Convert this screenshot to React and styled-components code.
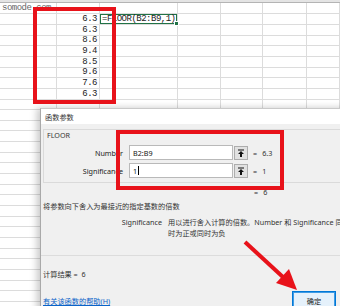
import React from "react";
import styled, { createGlobalStyle } from "styled-components";

const GlobalStyle = createGlobalStyle`
  html, body { margin: 0; padding: 0; background: #fff; }
  body { width: 340px; height: 306px; overflow: hidden; }
`;

const UI_FONT = `"Noto Sans", "Noto Sans CJK SC", sans-serif`;
const SHEET_FONT = `"Liberation Mono", "Noto Sans CJK SC", monospace`;
const RED = "#e8121a";

const COLS = "57px 43px 78px 43px 42px 44px 1fr";
const VALUES = ["6.3", "6.3", "8.6", "9.4", "8.5", "9.6", "7.6", "6.3"];
const ROW_COUNT = 28;

// bottom grid line of row i sits at round(13 + i * 10.67)
const rowHeight = (i) => {
  const prev = i === 0 ? 2 : Math.round(13 + (i - 1) * 10.67);
  return Math.round(13 + i * 10.67) - prev;
};

const Page = styled.div`
  position: relative;
  width: 340px;
  height: 306px;
  overflow: hidden;
  background: #fff;
`;

/* ---------- spreadsheet ---------- */
const Sheet = styled.div`
  display: flex;
  flex-direction: column;
`;

const HeaderStrip = styled.div`
  height: 3px;
  box-sizing: border-box;
  background: #e4e4e4;
  border-bottom: 1px solid #b4b4b4;
`;

const Row = styled.div`
  display: grid;
  grid-template-columns: ${COLS};
  height: ${(p) => p.$h}px;
`;

const Cell = styled.div`
  position: relative;
  box-sizing: border-box;
  border-right: 1px solid #dcdcdc;
  border-bottom: 1px solid #dcdcdc;
  font-family: ${SHEET_FONT};
  font-size: 9px;
  letter-spacing: -0.5px;
  color: ${(p) => (p.$muted ? "#666" : "#222")};
  text-align: ${(p) => p.$align || "left"};
  padding: 0 2px;
  white-space: nowrap;
  display: flex;
  align-items: center;
  justify-content: ${(p) => (p.$align === "right" ? "flex-end" : "flex-start")};
`;

const FormulaCell = styled(Cell)`
  box-shadow: inset 0 0 0 1px #217346;
  overflow: visible;
  z-index: 1;

  &::after {
    content: "";
    position: absolute;
    right: -2px;
    bottom: -2px;
    width: 3px;
    height: 3px;
    background: #217346;
    border: 1px solid #fff;
  }
`;

/* ---------- dialog ---------- */
const Dialog = styled.div`
  position: absolute;
  left: 40px;
  top: 108px;
  width: 312px;
  height: 210px;
  display: flex;
  flex-direction: column;
  border-left: 1px solid #a9a9a9;
  border-top: 1px solid #c9c9c9;
  box-shadow: -3px 0 7px rgba(0, 0, 0, 0.22);
  font-family: ${UI_FONT};
  font-size: 7.2px;
  color: #222;
  z-index: 2;
`;

const TitleBar = styled.div`
  height: 15px;
  background: #fff;
  display: flex;
  align-items: center;
  padding-left: 4px;
  font-size: 7.2px;
  color: #333;
`;

const Body = styled.div`
  flex: 1;
  background: #f0f0f0;
  padding: 5px 0 0 2px;
  display: flex;
  flex-direction: column;
`;

const GroupBox = styled.fieldset`
  margin: 0;
  padding: 0;
  height: 54px;
  box-sizing: border-box;
  border: 1px solid #dadada;
  border-right: none;
  display: flex;
  flex-direction: column;
  min-width: 0;
`;

const GroupLabel = styled.div`
  padding: 1px 0 0 3px;
  line-height: 8px;
  color: #333;
`;

const ArgGrid = styled.div`
  margin-top: 6px;
  display: grid;
  grid-template-columns: 85px 104px 15px 1fr;
  grid-auto-rows: 15px;
  row-gap: 3px;
  align-items: center;
`;

const ArgLabel = styled.div`
  text-align: right;
  padding-right: 6px;
  color: #222;
`;

const ArgInput = styled.div`
  height: 15px;
  box-sizing: border-box;
  background: #fff;
  border: 1px solid #b9b9b9;
  display: flex;
  align-items: center;
  padding-left: 3px;
  color: #111;
`;

const Caret = styled.span`
  display: inline-block;
  width: 1px;
  height: 9px;
  margin-left: 1px;
  background: #000;
`;

const PickButton = styled.div`
  margin-left: 1px;
  width: 14px;
  height: 14px;
  box-sizing: border-box;
  background: #e1e1e1;
  border: 1px solid #adadad;
  display: flex;
  align-items: center;
  justify-content: center;
`;

const ArgValue = styled.div`
  padding-left: 5px;
  display: flex;
  gap: 5px;
  color: #333;
`;

const ResultLine = styled.div`
  margin-top: 4px;
  height: 10px;
  line-height: 10px;
  padding-left: ${(p) => p.$indent || 0}px;
  display: flex;
  gap: 5px;
  color: #333;
`;

const TextLine = styled.div`
  margin-top: ${(p) => p.$mt || 0}px;
  line-height: 10px;
  color: #333;
  white-space: nowrap;
`;

const ArgHelp = styled.div`
  margin-top: 6px;
  display: grid;
  grid-template-columns: 119px 1fr;
  column-gap: 6px;
  line-height: 11px;
  white-space: nowrap;
  color: #333;
`;

const ArgHelpName = styled.div`
  text-align: right;
`;

const Separator = styled.div`
  margin: 16px 0 0 -2px;
  height: 1px;
  background: #dcdcdc;
`;

const Footer = styled.div`
  margin-top: 12px;
  padding-right: 17px;
  height: 20px;
  display: flex;
  align-items: center;
  justify-content: space-between;
`;

const HelpLink = styled.a`
  color: #0a63c9;
  text-decoration: underline;
  cursor: pointer;
`;

const OkButton = styled.button`
  width: 44px;
  height: 20px;
  box-sizing: border-box;
  background: #e5f1fb;
  border: 1px solid #0078d7;
  box-shadow: inset 0 0 0 1px #3f9be4;
  font-family: ${UI_FONT};
  font-size: 7.2px;
  color: #222;
  padding: 0;
`;

/* ---------- annotations ---------- */
const Mark = styled.div`
  position: absolute;
  left: ${(p) => p.$x}px;
  top: ${(p) => p.$y}px;
  width: ${(p) => p.$w}px;
  height: ${(p) => p.$h}px;
  box-sizing: border-box;
  border: 4px solid ${RED};
  z-index: 3;
  pointer-events: none;
`;

const ArrowLayer = styled.svg`
  position: absolute;
  left: 0;
  top: 0;
  z-index: 3;
  pointer-events: none;
`;

const CollapseIcon = () => (
  <svg width="8" height="8" viewBox="0 0 8 8">
    <rect x="1" y="0.5" width="6" height="1" fill="#111" />
    <path d="M4 2 L7 5 L5 5 L5 8 L3 8 L3 5 L1 5 Z" fill="#111" />
  </svg>
);

function SheetGrid() {
  const rows = [];
  for (let i = 0; i < ROW_COUNT; i++) {
    const value = i >= 1 && i <= VALUES.length ? VALUES[i - 1] : "";
    rows.push(
      <Row key={i} $h={rowHeight(i)}>
        <Cell $muted>{i === 0 ? "somode.com" : ""}</Cell>
        <Cell $align="right">{value}</Cell>
        {i === 1 ? <FormulaCell>=FLOOR(B2:B9,1)</FormulaCell> : <Cell />}
        <Cell />
        <Cell />
        <Cell />
        <Cell />
      </Row>
    );
  }
  return (
    <Sheet>
      <HeaderStrip />
      {rows}
    </Sheet>
  );
}

function FunctionDialog() {
  const args = [
    { name: "Number", value: "B2:B9", result: "6.3" },
    { name: "Significance", value: "1", result: "1", caret: true },
  ];

  return (
    <Dialog>
      <TitleBar>函数参数</TitleBar>
      <Body>
        <GroupBox>
          <GroupLabel>FLOOR</GroupLabel>
          <ArgGrid>
            {args.map((a) => (
              <React.Fragment key={a.name}>
                <ArgLabel>{a.name}</ArgLabel>
                <ArgInput>
                  {a.value}
                  {a.caret && <Caret />}
                </ArgInput>
                <PickButton>
                  <CollapseIcon />
                </PickButton>
                <ArgValue>
                  <span>=</span>
                  <span>{a.result}</span>
                </ArgValue>
              </React.Fragment>
            ))}
          </ArgGrid>
        </GroupBox>
        <ResultLine $indent={211}>
          <span>=</span>
          <span>6</span>
        </ResultLine>
        <TextLine $mt={4}>将参数向下舍入为最接近的指定基数的倍数</TextLine>
        <ArgHelp>
          <ArgHelpName>Significance</ArgHelpName>
          <div>
            用以进行舍入计算的倍数。Number 和 Significance 同
            <br />
            时为正或同时为负
          </div>
        </ArgHelp>
        <Separator />
        <TextLine $mt={13}>计算结果 = &nbsp;6</TextLine>
        <Footer>
          <HelpLink>有关该函数的帮助(H)</HelpLink>
          <OkButton>确定</OkButton>
        </Footer>
      </Body>
    </Dialog>
  );
}

export default function App() {
  return (
    <Page>
      <GlobalStyle />
      <SheetGrid />
      <FunctionDialog />
      <Mark $x={33} $y={7} $w={83} $h={97} />
      <Mark $x={116} $y={130} $w={168} $h={60} />
      <ArrowLayer width="340" height="306" viewBox="0 0 340 306">
        <line x1="245" y1="242" x2="284" y2="278" stroke={RED} strokeWidth="4" />
        <polygon points="297,290 276,283 289,269" fill={RED} />
      </ArrowLayer>
    </Page>
  );
}
